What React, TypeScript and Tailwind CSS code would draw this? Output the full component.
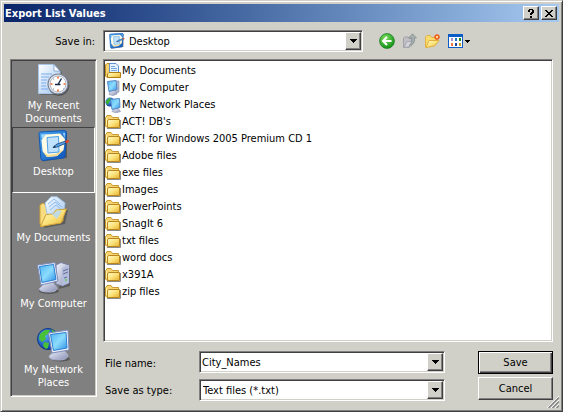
import { useState, type ReactNode } from "react";

type IconProps = { className?: string };

const sunken =
  "border border-t-[#808080] border-l-[#808080] border-r-white border-b-white shadow-[inset_1px_1px_0_#404040,inset_-1px_-1px_0_#d0d0c8]";
const raised =
  "border border-t-white border-l-white border-r-[#404040] border-b-[#404040] bg-[#d0d0c8] shadow-[inset_-1px_-1px_0_#808080]";

// Gradients shared by all the icons below
const IconDefs = () => (
  <svg width="0" height="0" className="absolute" aria-hidden="true">
    <defs>
      <linearGradient id="folder" x1="0" y1="0" x2="1" y2="1">
        <stop offset="0" stopColor="#fffbd0" />
        <stop offset="0.5" stopColor="#fbe27a" />
        <stop offset="1" stopColor="#e5b030" />
      </linearGradient>
      <linearGradient id="screen" x1="0" y1="0" x2="1" y2="1">
        <stop offset="0" stopColor="#4fb4f4" />
        <stop offset="0.5" stopColor="#8cdcfc" />
        <stop offset="1" stopColor="#2c8ee8" />
      </linearGradient>
      <linearGradient id="paper" x1="0" y1="0" x2="1" y2="1">
        <stop offset="0" stopColor="#ffffff" />
        <stop offset="1" stopColor="#9cc4f0" />
      </linearGradient>
      <linearGradient id="blue" x1="0" y1="0" x2="1" y2="1">
        <stop offset="0" stopColor="#4aa8f0" />
        <stop offset="1" stopColor="#0c50b8" />
      </linearGradient>
      <linearGradient id="metal" x1="0" y1="0" x2="1" y2="1">
        <stop offset="0" stopColor="#f4f6ff" />
        <stop offset="1" stopColor="#8890b4" />
      </linearGradient>
      <radialGradient id="globe" cx="0.35" cy="0.35" r="0.7">
        <stop offset="0" stopColor="#58b0f8" />
        <stop offset="1" stopColor="#0830a0" />
      </radialGradient>
      <radialGradient id="green" cx="0.4" cy="0.3" r="0.7">
        <stop offset="0" stopColor="#7ee060" />
        <stop offset="1" stopColor="#149018" />
      </radialGradient>
    </defs>
  </svg>
);

const RecentIcon = () => (
  <svg width="32" height="32" viewBox="0 0 32 32">
    <path d="M2 2H18L24 8V31H2Z" fill="#404040" opacity="0.35" />
    <path d="M0.5 0.5H16L22 7V29.5H0.5Z" fill="url(#paper)" stroke="#a8c4e8" />
    <path d="M16 0.5V7H22Z" fill="#fff" stroke="#7090c0" strokeWidth="0.7" />
    <path d="M3 10H14M3 13H11M3 16H9M3 19H8M3 22H8M3 25H10" stroke="#7cacec" />
    <circle cx="21" cy="21.5" r="10.5" fill="#303030" opacity="0.5" />
    <circle cx="20" cy="20" r="10" fill="#e4e8f0" stroke="#7c8494" strokeWidth="1.2" />
    <circle cx="20" cy="20" r="8" fill="#fff" stroke="#b0bccc" />
    <path d="M20 12.5V14.5M20 25.5V27.5M12.5 20H14.5M25.5 20H27.5" stroke="#f06820" strokeWidth="1.6" />
    <path d="M15 15H16M25 25H26M15 25H16" stroke="#7890b0" />
    <path d="M23.5 14.5L20 20.5M17 20.5H22.5" stroke="#182848" strokeWidth="1.4" />
  </svg>
);

const DesktopIcon = ({ className = "size-8" }: IconProps) => (
  <svg className={className} viewBox="0 0 32 32">
    <path d="M3 5L29 2L29 28Q17 29 5 31.5Z" fill="#303030" opacity="0.5" />
    <path d="M1 3.5Q1 2 3 2L26 .5Q28.5 .5 28.5 2.5L27 26Q27 28 25 28L5 30.5Q3 30.5 2.8 28Z" fill="url(#blue)" stroke="#1058b4" />
    <path d="M3 4.5L9 4L4 9ZM25 3L27 3L26.5 8Z" fill="#a4d8fc" />
    <path d="M8 4.5L22 3.5L27 9L25.5 20L19 26L9 27L4.5 21L3.5 10Z" fill="#fffbe4" />
    <path d="M5 22L9 27L19 26L25.5 20L24 20L18 24L10 25Z" fill="#f4dc90" />
    <path d="M9 7.5L20.5 6.5L21 22L10 23Z" fill="#c0e2fc" stroke="#50a0e8" />
    <path d="M15 17.5L18 14.5L27 11.2L28 13.2L19 17Z" fill="#58a4e8" stroke="#143c74" strokeWidth="0.8" />
    <path d="M15 17.5L17 15.5L17.5 17.2Z" fill="#101820" />
    <path d="M27 11L30 9.8Q31.5 10.5 31 12L28 13.2Z" fill="#e04428" />
  </svg>
);

const OpenDocumentsIcon = () => (
  <svg width="32" height="32" viewBox="0 0 32 32">
    <path d="M4 12L9 9L30 14L27 28L6 32Z" fill="#303030" opacity="0.45" />
    <path d="M2 9L5 7L9 10L25 11V25L4 30.5Q2 30 2 27Z" fill="#f8dc80" stroke="#d0a030" />
    <path d="M7 7L13 .8L19 .8L27 7L25 20L10 23Z" fill="url(#paper)" stroke="#a0c4e8" />
    <path d="M10 8L16 3L22 8M11 11L17 6L24 11M12 14L18 9L24 14" stroke="#8cbcf0" fill="none" />
    <path d="M2.5 30.5L8 18.5L15 18L18 14L28.5 13L23 27Z" fill="url(#folder)" stroke="#d0a438" />
    <path d="M13 17.5L19 23L24 14.5L19 14.5L16 17.5Z" fill="#b4d8f4" opacity="0.85" />
  </svg>
);

const ComputerIcon = () => (
  <svg width="34" height="32" viewBox="0 0 34 32">
    <path d="M20 5L33 6V24L22 27Z" fill="#303030" opacity="0.45" />
    <path d="M19 3L24 .5L32 3V21L25 24L19 22Z" fill="url(#metal)" stroke="#7880a4" />
    <path d="M25 6V24L32 21V3Z" fill="#b4bcdc" />
    <path d="M26 9L31 7M26 12L31 10M27 16L30 15" stroke="#636c94" />
    <circle cx="29" cy="18" r="1" fill="#58d048" />
    <ellipse cx="12" cy="29" rx="10" ry="3" fill="#303030" opacity="0.5" />
    <path d="M8 21L15 19L20 26Q20 30 12 30Q3 30 2 27Z" fill="url(#metal)" stroke="#a8b0cc" />
    <path d="M0.5 3L18 .5L21 19L4 23Z" fill="#eceffc" stroke="#7c8cb8" />
    <path d="M2.5 4.5L16.5 2.5L19 17.5L5 20.5Z" fill="url(#screen)" stroke="#2c80d0" />
  </svg>
);

const NetworkIcon = () => (
  <svg width="34" height="34" viewBox="0 0 34 34">
    <circle cx="11" cy="11" r="10.5" fill="url(#globe)" stroke="#0c3484" />
    <path d="M3 6L8 2L13 2L11 6L8 8L9 11L5 14L2 11ZM7 14L12 15L11 20L9 21L6 18Z" fill="#48c038" />
    <path d="M14 1L19 4L20 8L16 5Z" fill="#48c038" />
    <ellipse cx="24" cy="31" rx="9" ry="2.5" fill="#303030" opacity="0.5" />
    <path d="M19 22L26 21L31 27Q31 32 22 32Q12 32 12 28Z" fill="url(#metal)" stroke="#a8b0cc" />
    <path d="M11.5 5L31 2L32 22L15 25Z" fill="#eceffc" stroke="#7c8cb8" />
    <path d="M13.5 6.5L29 4.5L30 20L16.5 22.5Z" fill="url(#screen)" stroke="#2c80d0" />
  </svg>
);

const FolderIcon = () => (
  <svg width="16" height="16" viewBox="0 0 16 16">
    <path d="M2 14.5H15.5V6" stroke="#8c8c8c" fill="none" />
    <path d="M0.5 3.5L2 2V1.5H6L7.5 3.5H13.5V13.5H2L0.5 12Z" fill="#f5d470" stroke="#c89830" />
    <path d="M2.5 13.5V6.5L4 5.5H14.5V13.5Z" fill="url(#folder)" stroke="#b8861c" />
    <path d="M1.5 4V11" stroke="#fff3b0" />
  </svg>
);

const SmallDocumentsIcon = () => (
  <svg width="16" height="16" viewBox="0 0 16 16">
    <path d="M0.5 2L2 .5H5V14.5H2L0.5 13Z" fill="#f5d470" stroke="#c08c20" />
    <path d="M4.5 0.5H11L13.5 3V11H4.5Z" fill="#e6f3ff" stroke="#6090d0" />
    <path d="M6 3.5H10M6 5.5H12M6 7.5H12" stroke="#78a8e4" />
    <path d="M2.5 14.5V11L4 9.5H15.5V14.5Z" fill="url(#folder)" stroke="#b07c14" />
  </svg>
);

const SmallComputerIcon = () => (
  <svg width="16" height="16" viewBox="0 0 16 16">
    <path d="M10 1H14V12L10 14Z" fill="#b0b8d0" stroke="#8890a8" strokeWidth="0.6" />
    <path d="M5 11L10 10L12 14L8 15.5L4 14.5Z" fill="url(#metal)" stroke="#949ab4" strokeWidth="0.7" />
    <path d="M2.5 1.5L11 .5L12 9.5L4 11.5Z" fill="url(#screen)" stroke="#5888c4" />
  </svg>
);

const SmallNetworkIcon = () => (
  <svg width="16" height="16" viewBox="0 0 16 16">
    <circle cx="5" cy="5" r="4.6" fill="url(#globe)" />
    <path d="M1 4L4 1L7 2L4 5L3 8L1 6Z" fill="#38b030" />
    <path d="M9 12L13 11L15.5 14.5L11 15.8L7 14.5Z" fill="url(#metal)" stroke="#949ab4" strokeWidth="0.7" />
    <path d="M5.5 2.5L14.5 1.5L15 10.5L7 12.5Z" fill="url(#screen)" stroke="#5888c4" />
  </svg>
);

const BackIcon = () => (
  <svg width="16" height="16" viewBox="0 0 16 16">
    <circle cx="8" cy="8" r="7.4" fill="url(#green)" stroke="#188020" strokeWidth="0.8" />
    <path d="M12.5 8H4.5M8 4L4 8L8 12" stroke="#fff" strokeWidth="2" fill="none" />
  </svg>
);

const UpIcon = () => (
  <svg width="16" height="16" viewBox="0 0 16 16">
    <path d="M1.5 14.5V5L3 4H6L7.5 5.5H10V11L7 14.5Z" fill="#c0c0c4" stroke="#a0a0a8" />
    <path d="M2 14.5L5 8.5H12L9 13.5Z" fill="#d4d4da" stroke="#a8a8b0" />
    <path d="M7 12.5Q10 11 9.5 5H6.5L10.5 .8L14.5 5H12.5Q13.5 11.5 7 12.5Z" fill="#a4aeae" stroke="#88928f" strokeWidth="0.8" />
  </svg>
);

const NewFolderIcon = () => (
  <svg width="16" height="16" viewBox="0 0 16 16">
    <path d="M0.5 14V4L2 2.5H5L6.5 4.5H11V8L8 13Z" fill="#f8dc70" stroke="#e0b040" />
    <path d="M1 14.5L4 7.5H14L9.5 13Z" fill="url(#folder)" stroke="#e0b040" />
    <path d="M12 1V7M9 4H15M10 2L14 6M14 2L10 6" stroke="#f05818" strokeWidth="1.4" />
    <circle cx="12" cy="4" r="1.2" fill="#ffe090" />
  </svg>
);

const ViewsIcon = () => (
  <svg width="15" height="14" viewBox="0 0 15 14" shapeRendering="crispEdges">
    <path d="M0 0H15V14H0Z" fill="#0c5cc8" />
    <path d="M1 3H14V13H1Z" fill="#fff" />
    <path d="M3 4h2v3h-2z" fill="#a890c8" />
    <path d="M7 4h2v3h-2z" fill="#2878c8" />
    <path d="M11 4h2v3h-2z" fill="#188828" />
    <path d="M3 9h2v3h-2z" fill="#f07840" />
    <path d="M7 9h2v3h-2z" fill="#1848a0" />
    <path d="M11 9h2v3h-2z" fill="#c8a020" />
  </svg>
);

const Arrow = ({ className = "" }: IconProps) => (
  <svg className={className} width="7" height="4" viewBox="0 0 7 4" shapeRendering="crispEdges">
    <path d="M0 0H7V1H6V2H5V3H4V4H3V3H2V2H1V1H0Z" fill="#000" />
  </svg>
);

const places = [
  { id: "recent", lines: ["My Recent", "Documents"], icon: <RecentIcon /> },
  { id: "desktop", lines: ["Desktop"], icon: <DesktopIcon /> },
  { id: "documents", lines: ["My Documents"], icon: <OpenDocumentsIcon /> },
  { id: "computer", lines: ["My Computer"], icon: <ComputerIcon /> },
  { id: "network", lines: ["My Network", "Places"], icon: <NetworkIcon /> },
];

const files: { name: string; icon?: ReactNode }[] = [
  { name: "My Documents", icon: <SmallDocumentsIcon /> },
  { name: "My Computer", icon: <SmallComputerIcon /> },
  { name: "My Network Places", icon: <SmallNetworkIcon /> },
  { name: "ACT! DB's" },
  { name: "ACT! for Windows 2005 Premium CD 1" },
  { name: "Adobe files" },
  { name: "exe files" },
  { name: "Images" },
  { name: "PowerPoints" },
  { name: "SnagIt 6" },
  { name: "txt files" },
  { name: "word docs" },
  { name: "x391A" },
  { name: "zip files" },
];

const DropButton = () => (
  <span className={`pointer-events-none flex w-4 shrink-0 items-center justify-center ${raised}`}>
    <Arrow />
  </span>
);

const TitleBar = () => (
  <header className="flex h-[18px] items-center gap-[2px] bg-linear-to-r from-[#0a246a] to-[#a6caf0] pr-[2px] pl-px">
    <h1 className="flex-1 text-[11px] font-bold text-white">Export List Values</h1>
    <button aria-label="Help" className={`flex h-[14px] w-4 items-center justify-center ${raised}`}>
      <svg width="6" height="9" viewBox="0 0 6 9" shapeRendering="crispEdges">
        <path d="M1 0H5V1H6V4H5V5H4V6H2V4H3V3H4V1H2V3H0V1H1ZM2 7H4V9H2Z" />
      </svg>
    </button>
    <button aria-label="Close" className={`flex h-[14px] w-4 items-center justify-center ${raised}`}>
      <svg width="8" height="7" viewBox="0 0 8 7" shapeRendering="crispEdges">
        <path d="M0 0H2V1H3V2H5V1H6V0H8V1H7V2H6V3H5V4H6V5H7V6H8V7H6V6H5V5H3V6H2V7H0V6H1V5H2V4H3V3H2V2H1V1H0Z" />
      </svg>
    </button>
  </header>
);

const App = () => {
  const [place, setPlace] = useState("desktop");
  const [fileName, setFileName] = useState("City_Names");

  return (
    <div className="relative flex min-h-screen w-full flex-col border border-t-[#d0d0c8] border-r-[#404040] border-b-[#404040] border-l-[#d0d0c8] bg-[#d0d0c8] p-[3px] font-['DejaVu_Sans_Condensed','DejaVu_Sans',sans-serif] text-[11px] leading-[13px] text-black shadow-[inset_1px_1px_0_#fff,inset_-1px_-1px_0_#808080]">
      <IconDefs />
      <TitleBar />

      <div className="flex items-center pt-2 pr-[6px] pb-[7px]">
        <label htmlFor="save-in" className="w-[99px] pr-2 text-right">
          Save in:
        </label>
        <div className={`flex h-[22px] max-w-[260px] flex-1 items-stretch bg-white p-px ${sunken}`}>
          <DesktopIcon className="mx-1 size-4 self-center" />
          <select id="save-in" className="flex-1 appearance-none bg-transparent outline-none">
            <option>Desktop</option>
          </select>
          <DropButton />
        </div>
        <div className="ml-4 flex items-center gap-[7px]">
          <button aria-label="Back">
            <BackIcon />
          </button>
          <button aria-label="Up one level">
            <UpIcon />
          </button>
          <button aria-label="New folder">
            <NewFolderIcon />
          </button>
          <button aria-label="Views" className="flex items-center gap-[2px]">
            <ViewsIcon />
            <Arrow className="h-[3px] w-[5px]" />
          </button>
        </div>
      </div>

      <div className="flex flex-1 gap-[6px] px-[6px]">
        <nav className={`mb-[11px] flex w-[87px] shrink-0 flex-col bg-[#808080] p-px ${sunken}`}>
          {places.map(({ id, lines, icon }) => (
            <button
              key={id}
              onClick={() => setPlace(id)}
              className={`flex h-[66px] flex-col items-center border pt-[2px] text-white ${
                place === id
                  ? "border-t-[#404040] border-r-white border-b-white border-l-[#404040]"
                  : "border-transparent"
              }`}
            >
              <span className="flex h-[35px] items-start">{icon}</span>
              {lines.map((line) => (
                <span key={line} className="whitespace-nowrap">
                  {line}
                </span>
              ))}
            </button>
          ))}
        </nav>

        <main className="flex min-w-0 flex-1 flex-col">
          <ul className={`flex-1 bg-white px-px pt-[2px] ${sunken}`}>
            {files.map(({ name, icon }) => (
              <li key={name} className="flex h-[17px] items-center gap-px">
                {icon ?? <FolderIcon />}
                {name}
              </li>
            ))}
          </ul>

          <form className="flex justify-between pt-[9px] pb-[7px]" onSubmit={(e) => e.preventDefault()}>
            <div className="flex max-w-[342px] flex-1 flex-col gap-[6px]">
              <div className="flex items-center">
                <label htmlFor="file-name" className="w-24 pt-[2px] pl-[2px]">
                  File name:
                </label>
                <div className={`flex h-[22px] flex-1 bg-white p-px ${sunken}`}>
                  <input
                    id="file-name"
                    value={fileName}
                    onChange={(e) => setFileName(e.target.value)}
                    className="min-w-0 flex-1 bg-transparent pt-px pl-px outline-none"
                  />
                  <DropButton />
                </div>
              </div>
              <div className="flex items-center">
                <label htmlFor="file-type" className="w-24 pl-[2px]">
                  Save as type:
                </label>
                <div className={`flex h-[22px] flex-1 bg-white p-px ${sunken}`}>
                  <select
                    id="file-type"
                    className="min-w-0 flex-1 appearance-none bg-transparent pt-px pl-[2px] outline-none"
                  >
                    <option>Text files (*.txt)</option>
                  </select>
                  <DropButton />
                </div>
              </div>
            </div>
            <div className="flex w-[75px] flex-col gap-[3px]">
              <button
                type="submit"
                className="h-[23px] border border-black bg-[#d0d0c8] shadow-[inset_1px_1px_0_#fff,inset_-1px_-1px_0_#404040,inset_-2px_-2px_0_#808080]"
              >
                Save
              </button>
              <button type="button" className={`h-[23px] ${raised}`}>
                Cancel
              </button>
            </div>
          </form>
        </main>
      </div>

      <svg className="absolute right-[3px] bottom-[3px]" width="12" height="12" viewBox="0 0 12 12" aria-hidden="true">
        <path d="M0 12L12 0M4 12L12 4M8 12L12 8" stroke="#fff" />
        <path d="M1.5 12L12 1.5M5.5 12L12 5.5M9.5 12L12 9.5" stroke="#808080" strokeWidth="1.4" />
      </svg>
    </div>
  );
};

export default App;
